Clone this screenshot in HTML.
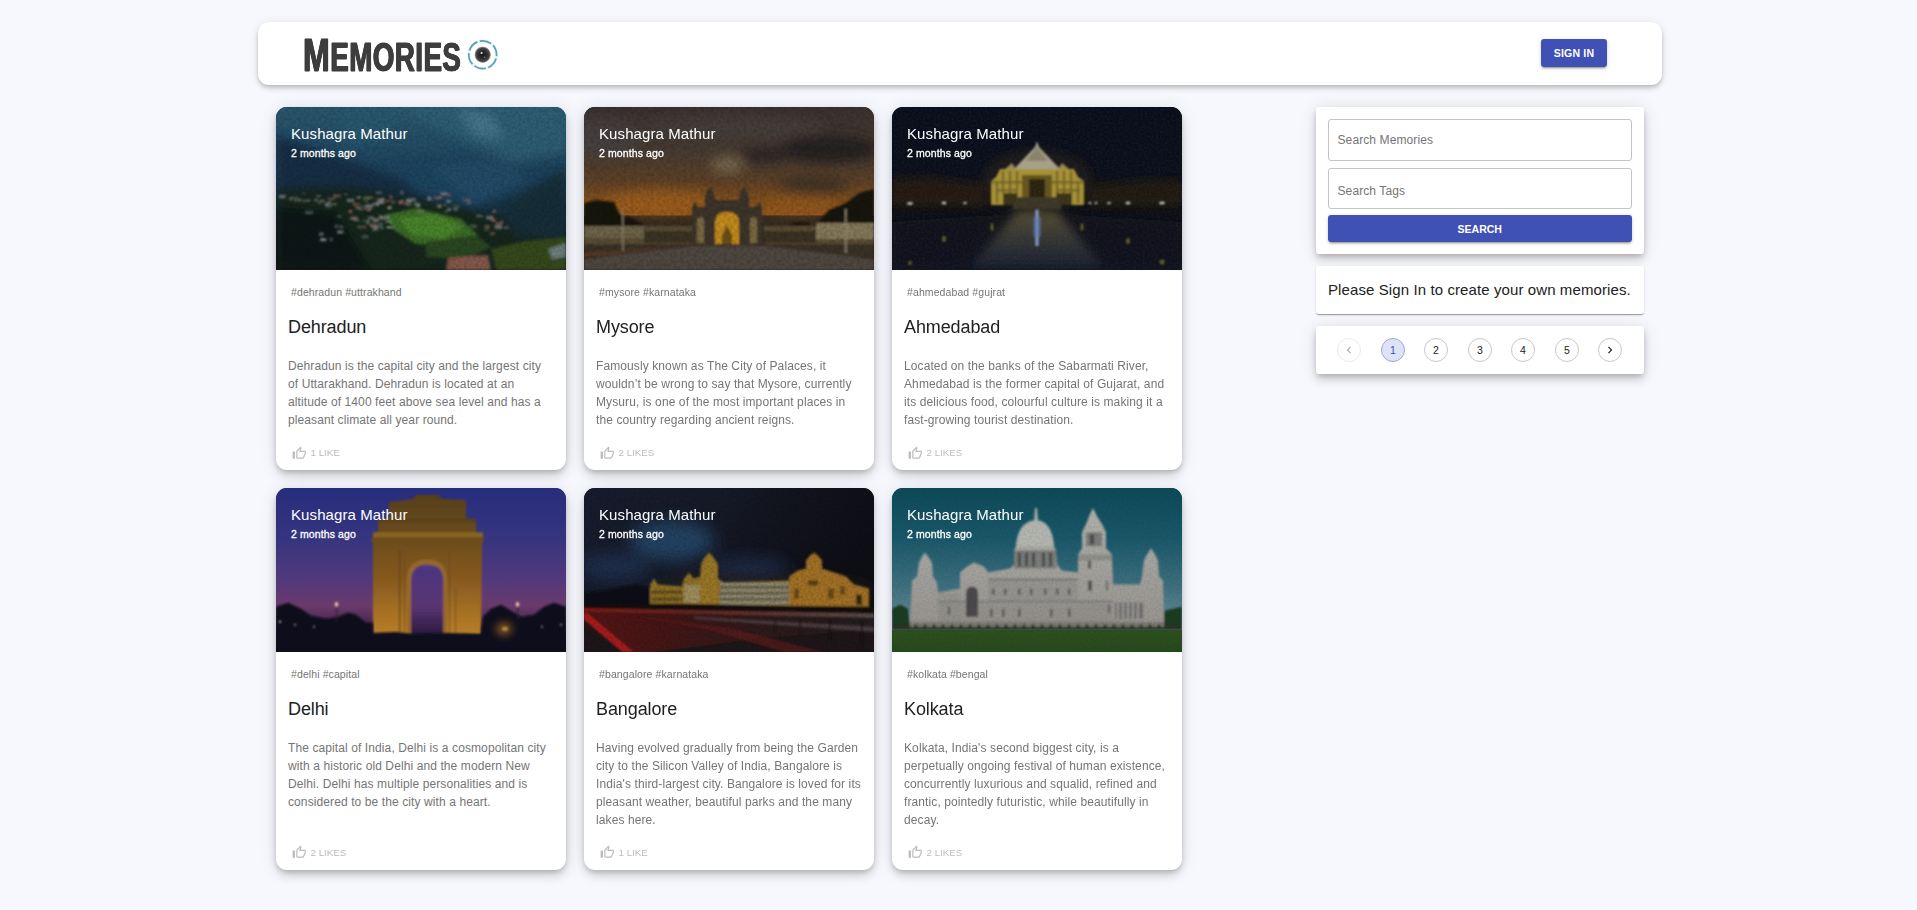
<!DOCTYPE html>
<html lang="en">
<head>
<meta charset="utf-8">
<title>Memories</title>
<style>
*{box-sizing:border-box;margin:0;padding:0}
html,body{width:1917px;height:910px;overflow:hidden}
body{background:#f7f8fd;font-family:"Liberation Sans",sans-serif;position:relative;color:#212121}
#appbar{position:absolute;left:258px;top:21.5px;width:1404px;height:63.5px;background:#fff;border-radius:11px;
 box-shadow:0 2px 4px -1px rgba(0,0,0,.16),0 4px 5px 0 rgba(0,0,0,.1),0 1px 10px 0 rgba(0,0,0,.09)}
#logo{position:absolute;left:44.500px;top:6.500px;font-weight:700;color:#3d3d3d;white-space:nowrap;transform-origin:0 0;transform:scaleX(.69);-webkit-text-stroke:.8px #3d3d3d;text-shadow:.7px 0 0 #3d3d3d,-.7px 0 0 #3d3d3d;letter-spacing:.6px}
#logo .b{font-size:46.6px}
#logo .s{font-size:40.3px}
#eye{position:absolute;left:208px;top:16.400px;width:34px;height:34px}
#signin{letter-spacing:.2px;position:absolute;left:1541px;top:39px;width:66px;height:28px;background:#3f51b5;color:#fff;border-radius:3px;
 font-size:10.5px;font-weight:700;text-align:center;line-height:28px;
 box-shadow:0 3px 1px -2px rgba(0,0,0,.2),0 2px 2px 0 rgba(0,0,0,.14),0 1px 5px 0 rgba(0,0,0,.12)}
.card{position:absolute;width:290px;background:#fff;border-radius:11px;overflow:hidden;
 box-shadow:0 3px 5px -1px rgba(0,0,0,.17),0 6px 10px 0 rgba(0,0,0,.12),0 1px 18px 0 rgba(0,0,0,.1)}
.card .img{position:absolute;left:0;top:0;width:290px;height:162.5px;overflow:hidden;background:#222}
.card .img svg{position:absolute;left:0;top:0;width:290px;height:163px;display:block}
.card .name{position:absolute;left:15px;top:17px;color:#fff;font-size:15px;line-height:20px;white-space:nowrap;letter-spacing:.1px}
.card .ago{position:absolute;left:15px;top:38.5px;color:#fff;font-size:10.5px;line-height:15px;white-space:nowrap;letter-spacing:.1px;-webkit-text-stroke:.3px #fff}
.card .tags{position:absolute;left:15px;top:178px;color:#757575;font-size:10.5px;line-height:15px;white-space:nowrap;letter-spacing:.1px}
.card .title{position:absolute;left:12px;top:208px;color:#212121;font-size:18px;line-height:24px;white-space:nowrap;letter-spacing:-.1px}
.card .desc{position:absolute;left:12px;top:249.700px;width:275px;color:#757575;font-size:12px;line-height:18px;letter-spacing:.1px}
.card .desc span{display:block;white-space:nowrap}
.card .like{position:absolute;left:16px;bottom:8px;height:18px;color:#bdbdbd;font-size:9.75px;line-height:18px;white-space:nowrap;padding-left:18.500px}
.card .like svg{position:absolute;left:0;top:1.500px;width:14.500px;height:14.500px;fill:#bdbdbd}
.panel{position:absolute;left:1316px;width:328px;background:#fff;border-radius:3px}
.inp{position:absolute;left:11.5px;width:304.5px;border:1px solid #c4c4c4;border-radius:3px;color:#757575;font-size:12px;padding-left:9px;letter-spacing:.1px}
.pg{position:absolute;top:12px;width:24px;height:24px;border:1px solid #c8c8c8;border-radius:50%;font-size:10.5px;line-height:22px;text-align:center;color:#212121}
.pg svg{position:absolute;left:4px;top:4px;width:14px;height:14px;fill:#212121}
.r2 .img{height:163.700px}.r2 .img svg{height:164px}.r2 .tags{top:179px}.r2 .title{top:209px}.r2 .desc{top:250.700px}
</style>
</head>
<body>
<div id="appbar"><div id="logo"><span class="b">M</span><span class="s">EMORIES</span></div><svg id="eye" viewBox="0 0 34 34"><defs><radialGradient id="eg"><stop offset="0" stop-color="#161616"/><stop offset=".5" stop-color="#2e2e2e"/><stop offset=".8" stop-color="#4c4c4c"/><stop offset=".9" stop-color="#777" stop-opacity=".7"/><stop offset="1" stop-color="#bbb" stop-opacity="0"/></radialGradient></defs><circle cx="16.700" cy="16.700" r="13.900" fill="none" stroke="#d8f0f6" stroke-width="3.200" opacity=".6"/><circle cx="16.700" cy="16.700" r="13.900" fill="none" stroke="#5d9fb6" stroke-width="1.700" stroke-dasharray="12.050 2.500" stroke-dashoffset="-3.900"/><circle cx="16.700" cy="16.700" r="8.600" fill="url(#eg)"/><circle cx="15.600" cy="15" r="1.100" fill="#ddd"/><circle cx="18.500" cy="19.300" r=".8" fill="#777"/></svg>
</div>
<div id="signin">SIGN IN</div>
<div class="card" style="left:276px;top:107px;height:363px">
<div class="img"><svg viewBox="0 0 290 163" preserveAspectRatio="none">
<defs>
<linearGradient id="a1" x1="0" y1="0" x2="0" y2="1"><stop offset="0" stop-color="#2a586e"/><stop offset=".22" stop-color="#244e68"/><stop offset=".45" stop-color="#1c3f59"/><stop offset=".62" stop-color="#173243"/><stop offset=".8" stop-color="#11261d"/><stop offset="1" stop-color="#0d1d15"/></linearGradient>
<filter id="b1" x="-20%" y="-20%" width="140%" height="140%"><feGaussianBlur stdDeviation="5"/></filter>
<filter id="c1" x="-20%" y="-20%" width="140%" height="140%"><feGaussianBlur stdDeviation="1.6"/></filter>
<filter id="d1" x="-5%" y="-5%" width="110%" height="110%"><feGaussianBlur stdDeviation="1"/></filter>
<filter id="n1"><feTurbulence type="fractalNoise" baseFrequency=".35" numOctaves="2" seed="3"/><feColorMatrix values="0 0 0 0 0  0 0 0 0 0  0 0 0 0 0  0 0 0 .3 -.08"/></filter>
</defs>
<rect width="290" height="163" fill="url(#a1)"/>
<g filter="url(#b1)">
<path d="M120 0L290 0L290 45L240 55L180 30Z" fill="#2f6179" opacity=".8"/>
<path d="M180 2L215 6L228 32L200 30Z" fill="#4f7f95" opacity=".7"/>
<path d="M60 0L130 0L110 30L70 40Z" fill="#2b5a72" opacity=".7"/>
<path d="M0 28L40 42L90 60L140 78L160 100L0 95Z" fill="#152e45"/>
<path d="M110 52L200 48L260 72L200 100L140 85Z" fill="#1d4560"/>
<path d="M150 60L230 50L250 75L200 96Z" fill="#24516c" opacity=".6"/>
<path d="M0 82L70 80L140 90L190 100L230 112L290 120L290 163L0 163Z" fill="#12281c"/>
<path d="M225 108L250 85L290 62L290 135L240 128Z" fill="#162e38"/>
<path d="M0 100L60 105L95 163L0 163Z" fill="#0a1912"/>
</g>
<g filter="url(#c1)">
<path d="M108 108L140 101L185 112L202 128L178 140L140 137L118 123Z" fill="#3a6c27"/>
<path d="M122 111L160 107L188 120L168 132L135 127Z" fill="#4a842c"/>
<path d="M150 135L200 128L215 140L190 152L150 150Z" fill="#2b4621"/>
<path d="M215 142L250 134L290 130L290 163L220 163Z" fill="#34481e"/>
<path d="M172 151L212 148L215 163L170 163Z" fill="#85594c"/>
<path d="M272 142L290 136L290 150L276 152Z" fill="#7c8d95" opacity=".8"/>
</g>
<g filter="url(#d1)"><rect x="18.0" y="91.5" width="7.6" height="2.8" fill="#a09a90" opacity="0.47"/><rect x="14.7" y="89.6" width="7.0" height="2.0" fill="#6f7f8a" opacity="0.46"/><rect x="3.3" y="88.0" width="6.2" height="3.1" fill="#8c9aa0" opacity="0.79"/><rect x="25.9" y="85.4" width="3.8" height="1.8" fill="#9a7068" opacity="0.42"/><rect x="44.9" y="92.8" width="3.2" height="2.8" fill="#5e7a50" opacity="0.64"/><rect x="44.4" y="92.7" width="4.5" height="1.8" fill="#9a7068" opacity="0.58"/><rect x="29.0" y="103.7" width="8.0" height="3.6" fill="#6f7f8a" opacity="0.53"/><rect x="41.9" y="93.3" width="3.4" height="3.5" fill="#8c9aa0" opacity="0.44"/><rect x="38.3" y="91.4" width="3.1" height="3.3" fill="#a09a90" opacity="0.48"/><rect x="57.1" y="87.6" width="7.9" height="2.7" fill="#9a7068" opacity="0.63"/><rect x="48.6" y="95.7" width="4.7" height="2.5" fill="#8a8e94" opacity="0.79"/><rect x="40.5" y="88.0" width="4.2" height="2.0" fill="#8a8e94" opacity="0.59"/><rect x="12.8" y="90.5" width="3.9" height="2.9" fill="#7d8a96" opacity="0.57"/><rect x="26.6" y="92.7" width="8.0" height="1.8" fill="#6f7f8a" opacity="0.80"/><rect x="51.5" y="90.3" width="8.0" height="3.1" fill="#9a7068" opacity="0.42"/><rect x="51.8" y="93.4" width="3.0" height="3.1" fill="#6f7f8a" opacity="0.55"/><rect x="125.3" y="95.5" width="6.2" height="1.8" fill="#a86a5a" opacity="0.55"/><rect x="49.5" y="97.7" width="5.4" height="3.1" fill="#8c9aa0" opacity="0.47"/><rect x="141.0" y="103.0" width="7.1" height="2.3" fill="#a09a90" opacity="0.46"/><rect x="88.1" y="89.4" width="6.4" height="2.7" fill="#5e7a50" opacity="0.64"/><rect x="99.7" y="95.1" width="3.2" height="3.9" fill="#a09a90" opacity="0.70"/><rect x="89.7" y="97.3" width="7.5" height="2.9" fill="#7d8a96" opacity="0.77"/><rect x="122.9" y="93.6" width="5.4" height="3.2" fill="#9a7068" opacity="0.51"/><rect x="124.7" y="92.3" width="3.1" height="2.4" fill="#5e7a50" opacity="0.50"/><rect x="129.5" y="95.2" width="5.7" height="3.9" fill="#9a7068" opacity="0.54"/><rect x="164.3" y="85.1" width="6.3" height="3.3" fill="#7d8a96" opacity="0.64"/><rect x="135.2" y="91.4" width="4.8" height="2.5" fill="#8a8e94" opacity="0.41"/><rect x="91.2" y="89.7" width="6.7" height="2.5" fill="#9a7068" opacity="0.43"/><rect x="70.8" y="91.7" width="7.5" height="3.4" fill="#7d8a96" opacity="0.72"/><rect x="130.0" y="91.6" width="6.4" height="3.8" fill="#8c9aa0" opacity="0.78"/><rect x="138.9" y="95.1" width="3.1" height="3.3" fill="#8c9aa0" opacity="0.63"/><rect x="102.1" y="92.7" width="6.2" height="4.0" fill="#8c9aa0" opacity="0.69"/><rect x="78.9" y="99.3" width="5.9" height="2.8" fill="#9a7068" opacity="0.61"/><rect x="88.5" y="93.6" width="3.4" height="1.8" fill="#9a7068" opacity="0.60"/><rect x="67.7" y="86.6" width="4.3" height="1.8" fill="#6f7f8a" opacity="0.46"/><rect x="86.9" y="90.1" width="6.8" height="2.6" fill="#5e7a50" opacity="0.60"/><rect x="111.4" y="99.1" width="4.3" height="3.2" fill="#a09a90" opacity="0.75"/><rect x="85.3" y="98.4" width="4.6" height="2.1" fill="#5e7a50" opacity="0.54"/><rect x="115.7" y="93.1" width="3.3" height="4.0" fill="#7d8a96" opacity="0.45"/><rect x="53.9" y="96.0" width="7.2" height="2.6" fill="#5e7a50" opacity="0.67"/><rect x="99.9" y="84.6" width="6.1" height="2.5" fill="#8a8e94" opacity="0.51"/><rect x="80.6" y="89.3" width="4.4" height="2.6" fill="#8a8e94" opacity="0.66"/><rect x="96.6" y="95.8" width="6.8" height="2.4" fill="#7d8a96" opacity="0.72"/><rect x="122.3" y="93.8" width="3.5" height="3.0" fill="#a86a5a" opacity="0.78"/><rect x="103.3" y="90.9" width="5.4" height="2.2" fill="#8a8e94" opacity="0.70"/><rect x="103.4" y="93.7" width="4.1" height="3.5" fill="#7d8a96" opacity="0.56"/><rect x="124.2" y="83.5" width="3.4" height="3.9" fill="#8c9aa0" opacity="0.45"/><rect x="76.4" y="96.0" width="7.5" height="2.6" fill="#a86a5a" opacity="0.59"/><rect x="100.2" y="91.2" width="6.6" height="3.6" fill="#9a7068" opacity="0.49"/><rect x="166.7" y="85.8" width="7.9" height="3.0" fill="#a86a5a" opacity="0.50"/><rect x="109.1" y="93.1" width="5.5" height="1.9" fill="#a86a5a" opacity="0.62"/><rect x="113.3" y="88.3" width="3.1" height="3.6" fill="#9a7068" opacity="0.57"/><rect x="176.9" y="98.1" width="6.4" height="3.8" fill="#5e7a50" opacity="0.46"/><rect x="137.7" y="96.3" width="7.2" height="3.3" fill="#5e7a50" opacity="0.63"/><rect x="151.2" y="90.8" width="5.2" height="3.0" fill="#7d8a96" opacity="0.61"/><rect x="170.0" y="92.7" width="4.6" height="2.6" fill="#a09a90" opacity="0.52"/><rect x="171.1" y="100.9" width="4.4" height="2.9" fill="#8c9aa0" opacity="0.61"/><rect x="140.9" y="96.9" width="3.1" height="3.9" fill="#8c9aa0" opacity="0.62"/><rect x="167.1" y="96.9" width="3.5" height="2.2" fill="#5e7a50" opacity="0.57"/><rect x="190.6" y="94.6" width="4.3" height="2.8" fill="#7d8a96" opacity="0.54"/><rect x="186.6" y="91.5" width="7.6" height="3.0" fill="#9a7068" opacity="0.48"/><rect x="136.5" y="90.9" width="3.6" height="3.5" fill="#8a8e94" opacity="0.41"/><rect x="161.2" y="97.5" width="4.4" height="3.4" fill="#a09a90" opacity="0.65"/><rect x="177.9" y="101.0" width="3.6" height="2.9" fill="#6f7f8a" opacity="0.69"/><rect x="151.3" y="89.2" width="3.1" height="3.2" fill="#7d8a96" opacity="0.62"/><rect x="171.3" y="93.3" width="4.1" height="2.3" fill="#7d8a96" opacity="0.49"/><rect x="158.5" y="89.7" width="7.5" height="2.5" fill="#a86a5a" opacity="0.76"/><rect x="168.3" y="103.5" width="4.0" height="2.0" fill="#a09a90" opacity="0.45"/><rect x="101.8" y="115.6" width="5.2" height="3.9" fill="#7d8a96" opacity="0.48"/><rect x="72.6" y="103.0" width="3.5" height="3.1" fill="#a86a5a" opacity="0.76"/><rect x="96.8" y="111.3" width="5.5" height="3.5" fill="#a09a90" opacity="0.72"/><rect x="86.9" y="112.2" width="6.8" height="3.1" fill="#5e7a50" opacity="0.46"/><rect x="93.8" y="116.3" width="7.2" height="4.0" fill="#9a7068" opacity="0.63"/><rect x="104.0" y="119.9" width="3.4" height="2.0" fill="#8c9aa0" opacity="0.59"/><rect x="75.2" y="111.3" width="6.0" height="1.8" fill="#8a8e94" opacity="0.74"/><rect x="96.4" y="119.0" width="6.7" height="2.7" fill="#a09a90" opacity="0.64"/><rect x="110.5" y="119.0" width="4.6" height="2.0" fill="#8c9aa0" opacity="0.63"/><rect x="96.7" y="120.6" width="4.7" height="3.5" fill="#6f7f8a" opacity="0.76"/><rect x="89.2" y="99.9" width="7.1" height="2.7" fill="#a86a5a" opacity="0.75"/><rect x="81.9" y="100.8" width="6.8" height="2.7" fill="#7d8a96" opacity="0.43"/><rect x="81.4" y="118.6" width="3.1" height="2.6" fill="#8a8e94" opacity="0.49"/><rect x="109.5" y="108.5" width="4.7" height="3.3" fill="#7d8a96" opacity="0.61"/><rect x="44.1" y="131.1" width="6.2" height="3.3" fill="#8c9aa0" opacity="0.79"/><rect x="109.2" y="113.4" width="6.7" height="2.4" fill="#8c9aa0" opacity="0.60"/><rect x="91.4" y="101.9" width="3.1" height="2.4" fill="#6f7f8a" opacity="0.76"/><rect x="74.1" y="109.4" width="7.8" height="3.0" fill="#9a7068" opacity="0.66"/><rect x="92.0" y="109.4" width="6.0" height="3.5" fill="#8a8e94" opacity="0.55"/><rect x="102.8" y="109.4" width="7.9" height="3.7" fill="#8a8e94" opacity="0.57"/><rect x="78.6" y="112.2" width="5.0" height="2.5" fill="#6f7f8a" opacity="0.59"/><rect x="86.0" y="128.0" width="6.3" height="3.4" fill="#8a8e94" opacity="0.41"/><rect x="90.1" y="114.1" width="3.8" height="3.5" fill="#8c9aa0" opacity="0.42"/><rect x="84.4" y="118.5" width="5.9" height="3.4" fill="#a86a5a" opacity="0.43"/><rect x="102.3" y="107.9" width="5.4" height="3.9" fill="#a09a90" opacity="0.42"/><rect x="110.8" y="119.4" width="7.5" height="2.1" fill="#a09a90" opacity="0.64"/><rect x="227.6" y="119.6" width="5.3" height="2.2" fill="#8a8e94" opacity="0.54"/><rect x="221.4" y="118.7" width="3.7" height="2.7" fill="#6f7f8a" opacity="0.66"/><rect x="210.3" y="108.8" width="6.7" height="3.6" fill="#7d8a96" opacity="0.78"/><rect x="214.1" y="109.6" width="3.6" height="3.8" fill="#a86a5a" opacity="0.51"/><rect x="200.1" y="107.9" width="6.5" height="2.2" fill="#6f7f8a" opacity="0.70"/><rect x="218.4" y="118.2" width="7.9" height="3.8" fill="#8a8e94" opacity="0.65"/><rect x="224.3" y="114.3" width="3.1" height="1.9" fill="#a09a90" opacity="0.62"/><rect x="219.6" y="115.1" width="6.4" height="3.0" fill="#a86a5a" opacity="0.59"/><rect x="208.4" y="118.3" width="5.5" height="2.1" fill="#9a7068" opacity="0.72"/><rect x="193.9" y="117.6" width="7.2" height="3.5" fill="#5e7a50" opacity="0.57"/><rect x="213.9" y="124.9" width="4.8" height="3.2" fill="#a86a5a" opacity="0.52"/><rect x="216.3" y="102.8" width="3.9" height="3.2" fill="#9a7068" opacity="0.58"/><rect x="208.2" y="120.7" width="5.2" height="3.0" fill="#5e7a50" opacity="0.52"/><rect x="215.8" y="111.6" width="4.1" height="3.3" fill="#9a7068" opacity="0.68"/><rect x="43.0" y="125.4" width="4.6" height="3.7" fill="#a09a90" opacity="0.54"/><rect x="58.6" y="117.4" width="3.6" height="3.4" fill="#6f7f8a" opacity="0.58"/><rect x="62.8" y="118.6" width="4.6" height="2.7" fill="#a09a90" opacity="0.43"/><rect x="61.0" y="123.4" width="6.4" height="3.1" fill="#a09a90" opacity="0.70"/><rect x="53.3" y="130.9" width="3.8" height="3.1" fill="#7d8a96" opacity="0.47"/><rect x="61.2" y="108.5" width="4.4" height="1.8" fill="#8a8e94" opacity="0.62"/></g>
<rect width="290" height="163" filter="url(#n1)"/>
</svg>
</div>
<div class="name">Kushagra Mathur</div><div class="ago">2 months ago</div>
<div class="tags">#dehradun #uttrakhand</div><div class="title">Dehradun</div>
<div class="desc"><span>Dehradun is the capital city and the largest city</span><span>of Uttarakhand. Dehradun is located at an</span><span>altitude of 1400 feet above sea level and has a</span><span>pleasant climate all year round.</span></div>
<div class="like"><svg viewBox="0 0 24 24"><path d="M9 21h9c.83 0 1.54-.5 1.84-1.22l3.02-7.05c.09-.23.14-.47.14-.73v-2c0-1.1-.9-2-2-2h-6.310l.95-4.570.03-.32c0-.41-.17-.79-.44-1.060L14.170 1 7.580 7.590C7.220 7.950 7 8.450 7 9v10c0 1.100.9 2 2 2zM9 9l4.340-4.340L12 10h9v2l-3 7H9V9zM1 9h4v12H1z"/></svg>1 LIKE</div>
</div>
<div class="card" style="left:584px;top:107px;height:363px">
<div class="img"><svg viewBox="0 0 290 163" preserveAspectRatio="none">
<defs>
<linearGradient id="a2" x1="0" y1="0" x2="0" y2="1"><stop offset="0" stop-color="#3a3331"/><stop offset=".28" stop-color="#4a3d33"/><stop offset=".45" stop-color="#5e4228"/><stop offset=".58" stop-color="#85521f"/><stop offset=".66" stop-color="#96591c"/><stop offset=".67" stop-color="#3a2e22"/><stop offset="1" stop-color="#2a2420"/></linearGradient>
<filter id="b2" x="-20%" y="-20%" width="140%" height="140%"><feGaussianBlur stdDeviation="6"/></filter>
<filter id="c2" x="-20%" y="-20%" width="140%" height="140%"><feGaussianBlur stdDeviation="1.2"/></filter>
<filter id="n2"><feTurbulence type="fractalNoise" baseFrequency=".3" numOctaves="2" seed="5"/><feColorMatrix values="0 0 0 0 0  0 0 0 0 0  0 0 0 0 0  0 0 0 .3 -.08"/></filter>
</defs>
<rect width="290" height="163" fill="url(#a2)"/>
<g filter="url(#b2)">
<ellipse cx="245" cy="42" rx="50" ry="14" fill="#282423"/>
<ellipse cx="180" cy="48" rx="25" ry="8" fill="#2d2826"/>
<ellipse cx="150" cy="20" rx="90" ry="12" fill="#4a4240" opacity=".6"/>
<ellipse cx="143" cy="58" rx="16" ry="8" fill="#8a7a5e" opacity=".75"/>
<ellipse cx="75" cy="95" rx="55" ry="12" fill="#a5621c" opacity=".7"/>
<ellipse cx="215" cy="98" rx="35" ry="9" fill="#9a5a1c" opacity=".6"/>
<ellipse cx="230" cy="78" rx="35" ry="9" fill="#3a2e28" opacity=".8"/>
<ellipse cx="20" cy="30" rx="40" ry="20" fill="#4a4548" opacity=".6"/>
</g>
<g filter="url(#c2)">
<path d="M0 96L12 93L30 95L36 108L50 112L60 118L0 122Z" fill="#17130c"/>
<path d="M290 82L275 86L262 96L245 103L232 118L290 122Z" fill="#17130c"/>
<path d="M205 118L212 115L225 116L228 122L205 123Z" fill="#1d160e"/>
<rect x="0" y="119" width="108" height="18" fill="#5a4d36"/>
<rect x="0" y="119" width="60" height="12" fill="#6e6248"/>
<rect x="180" y="119" width="110" height="18" fill="#5a4d36"/>
<rect x="232" y="116" width="58" height="16" fill="#85785a"/>
<rect x="60" y="124" width="48" height="12" fill="#3a3022"/>
<rect x="180" y="124" width="52" height="12" fill="#3a3022"/>
<path d="M0 137L290 137L290 150L0 150Z" fill="#3b3028"/>
<path d="M0 163L0 152L110 139L180 139L290 152L290 163Z" fill="#4f463f"/>
<path d="M0 150L100 140L0 146Z" fill="#5a3a22"/>
<path d="M108 138L108 100L111 94L114 100L121 100L121 90L123 84L126 80L129 84L131 90L131 93L155 93L155 90L157 84L160 80L163 84L165 90L165 100L172 100L175 94L178 100L178 138Z" fill="#3d3529"/>
<path d="M131 137L131 116Q131 105 143 105Q155 105 155 116L155 137Z" fill="#c48c1c"/>
<path d="M138 137L138 128L141 122L143 118L145 122L148 128L148 137Z" fill="#6a5018"/>
<path d="M113 136L113 114Q113 110 116.500 110Q120 110 120 114L120 136Z" fill="#7a6a42"/>
<path d="M166 136L166 114Q166 110 169.500 110Q173 110 173 114L173 136Z" fill="#7a6a42"/>
<rect x="38" y="100" width="1.500" height="44" fill="#8a8068"/>
<rect x="261" y="102" width="1.500" height="44" fill="#9a9078"/>
</g>
<rect width="290" height="163" filter="url(#n2)"/>
</svg>
</div>
<div class="name">Kushagra Mathur</div><div class="ago">2 months ago</div>
<div class="tags">#mysore #karnataka</div><div class="title">Mysore</div>
<div class="desc"><span>Famously known as The City of Palaces, it</span><span>wouldn’t be wrong to say that Mysore, currently</span><span>Mysuru, is one of the most important places in</span><span>the country regarding ancient reigns.</span></div>
<div class="like"><svg viewBox="0 0 24 24"><path d="M9 21h9c.83 0 1.54-.5 1.84-1.22l3.02-7.05c.09-.23.14-.47.14-.73v-2c0-1.1-.9-2-2-2h-6.310l.95-4.570.03-.32c0-.41-.17-.79-.44-1.060L14.170 1 7.580 7.590C7.220 7.950 7 8.450 7 9v10c0 1.100.9 2 2 2zM9 9l4.340-4.340L12 10h9v2l-3 7H9V9zM1 9h4v12H1z"/></svg>2 LIKES</div>
</div>
<div class="card" style="left:892px;top:107px;height:363px">
<div class="img"><svg viewBox="0 0 290 163" preserveAspectRatio="none">
<defs>
<linearGradient id="a3" x1="0" y1="0" x2="0" y2="1"><stop offset="0" stop-color="#090d1a"/><stop offset=".42" stop-color="#0a0e1a"/><stop offset=".5" stop-color="#14120f"/><stop offset=".57" stop-color="#19150f"/><stop offset=".62" stop-color="#0d0f14"/><stop offset="1" stop-color="#0b0f1c"/></linearGradient>
<linearGradient id="r3" x1="0" y1="0" x2="0" y2="1"><stop offset="0" stop-color="#544b2e"/><stop offset=".4" stop-color="#383832"/><stop offset="1" stop-color="#161c2e"/></linearGradient>
<filter id="b3" x="-20%" y="-20%" width="140%" height="140%"><feGaussianBlur stdDeviation="5"/></filter>
<filter id="c3" x="-20%" y="-20%" width="140%" height="140%"><feGaussianBlur stdDeviation=".8"/></filter>
<filter id="n3"><feTurbulence type="fractalNoise" baseFrequency=".45" numOctaves="2" seed="21"/><feColorMatrix values="0 0 0 0 .22  0 0 0 0 .24  0 0 0 0 .3  0 0 0 .35 -.12"/></filter>
</defs>
<rect width="290" height="163" fill="url(#a3)"/>
<g filter="url(#b3)">
<path d="M0 72L40 70L90 78L95 98L0 98Z" fill="#261d10" opacity=".8"/>
<path d="M290 74L250 72L200 80L195 98L290 98Z" fill="#211a10" opacity=".8"/>
<ellipse cx="145" cy="72" rx="55" ry="30" fill="#2a2410" opacity=".45"/>
<path d="M125 104L165 104L215 163L75 163Z" fill="url(#r3)"/>
<path d="M0 115L110 108L70 163L0 163Z" fill="#14161a" opacity=".7"/>
<path d="M290 115L180 108L220 163L290 163Z" fill="#12151c" opacity=".7"/>
</g>
<g filter="url(#c3)">
<path d="M145 34L147 40L168 62L122 62L143 40Z" fill="#a8a288"/>
<path d="M145 40L156 54L134 54Z" fill="#8a846c"/>
<path d="M108 62L182 62L186 70L192 74L192 98L99 98L99 74L104 70Z" fill="#a89236"/>
<path d="M113 62L120 56L124 62ZM166 62L170 56L177 62Z" fill="#9a8c58"/>
<rect x="99" y="74" width="93" height="2.500" fill="#786826"/><rect x="104" y="82" width="20" height="2.500" fill="#786826"/><rect x="166" y="82" width="22" height="2.500" fill="#786826"/>
<g fill="#6e5e22"><rect x="104" y="76" width="2" height="20"/><rect x="110" y="64" width="2" height="22"/><rect x="117" y="64" width="2" height="22"/><rect x="124" y="64" width="2" height="26"/><rect x="164" y="64" width="2" height="26"/><rect x="171" y="64" width="2" height="22"/><rect x="178" y="64" width="2" height="22"/><rect x="185" y="76" width="2" height="20"/></g>
<rect x="130" y="68" width="30" height="22" fill="#64541e"/>
<rect x="137" y="72" width="16" height="18" fill="#2a2410"/>
<rect x="111" y="86" width="14" height="12" fill="#3a3012"/>
<rect x="164" y="86" width="16" height="12" fill="#3a3012"/>
<path d="M124 90L166 90L170 102L120 102Z" fill="#3a3426"/>
<rect x="143.500" y="103" width="3" height="36" fill="#86a2d8"/>
<rect x="141" y="110" width="8" height="20" fill="#5a78b8" opacity=".5"/>
<g fill="#d8d8c8"><ellipse cx="18" cy="96.500" rx="3" ry="1.300"/><ellipse cx="52" cy="96" rx="2.500" ry="1.200"/><ellipse cx="73" cy="96" rx="2" ry="1"/><ellipse cx="198" cy="96" rx="1.500" ry="1"/><ellipse cx="204" cy="96" rx="1.500" ry="1"/><ellipse cx="217" cy="96" rx="2" ry="1"/><ellipse cx="236" cy="96" rx="2.500" ry="1.200"/><ellipse cx="270" cy="96" rx="3" ry="1.300"/></g>
<g fill="#8a7a3a" opacity=".7"><ellipse cx="52" cy="132" rx="2" ry="3"/><ellipse cx="18" cy="156" rx="2" ry="2"/><ellipse cx="236" cy="134" rx="2" ry="3"/><ellipse cx="270" cy="155" rx="2.500" ry="2.500"/><ellipse cx="100" cy="120" rx="1.500" ry="4"/><ellipse cx="190" cy="120" rx="1.500" ry="4"/></g>
</g>
<rect width="290" height="163" filter="url(#n3)" opacity=".5"/>
</svg>
</div>
<div class="name">Kushagra Mathur</div><div class="ago">2 months ago</div>
<div class="tags">#ahmedabad #gujrat</div><div class="title">Ahmedabad</div>
<div class="desc"><span>Located on the banks of the Sabarmati River,</span><span>Ahmedabad is the former capital of Gujarat, and</span><span>its delicious food, colourful culture is making it a</span><span>fast-growing tourist destination.</span></div>
<div class="like"><svg viewBox="0 0 24 24"><path d="M9 21h9c.83 0 1.54-.5 1.84-1.22l3.02-7.05c.09-.23.14-.47.14-.73v-2c0-1.1-.9-2-2-2h-6.310l.95-4.570.03-.32c0-.41-.17-.79-.44-1.060L14.170 1 7.580 7.590C7.220 7.950 7 8.450 7 9v10c0 1.100.9 2 2 2zM9 9l4.340-4.340L12 10h9v2l-3 7H9V9zM1 9h4v12H1z"/></svg>2 LIKES</div>
</div>
<div class="card r2" style="left:276px;top:488px;height:381.6px">
<div class="img"><svg viewBox="0 0 290 163" preserveAspectRatio="none">
<defs>
<linearGradient id="a4" x1="0" y1="0" x2="0" y2="1"><stop offset="0" stop-color="#272d7c"/><stop offset=".3" stop-color="#35347f"/><stop offset=".55" stop-color="#51397c"/><stop offset=".72" stop-color="#6a3a6c"/><stop offset=".82" stop-color="#4a2850"/><stop offset=".9" stop-color="#15102a"/><stop offset="1" stop-color="#0a0c1c"/></linearGradient>
<linearGradient id="g4" x1="0" y1="0" x2="0" y2="1"><stop offset="0" stop-color="#574019"/><stop offset=".3" stop-color="#6b4c1e"/><stop offset=".6" stop-color="#86591f"/><stop offset=".85" stop-color="#a87224"/><stop offset="1" stop-color="#b87e28"/></linearGradient>
<linearGradient id="s4" x1="0" y1="0" x2="0" y2="1"><stop offset="0" stop-color="#4a3780"/><stop offset=".6" stop-color="#5a3572"/><stop offset="1" stop-color="#2a1a40"/></linearGradient>
<filter id="c4" x="-20%" y="-20%" width="140%" height="140%"><feGaussianBlur stdDeviation="1"/></filter>
<filter id="b4" x="-150%" y="-150%" width="400%" height="400%"><feGaussianBlur stdDeviation="4"/></filter>
</defs>
<rect width="290" height="163" fill="url(#a4)"/>
<g filter="url(#c4)">
<path d="M140 7L162 7L166 11L190 12L190 30L200 31L200 48L208 50L206 56L205 146L97 146L97 56L95 50L102 48L102 31L113 30L113 14L137 11Z" fill="url(#g4)"/>
<rect x="97" y="44" width="110" height="5" fill="#8a6424"/>
<rect x="102" y="31" width="98" height="3" fill="#5a4018"/>
<path d="M135 146L135 92Q135 76 151 76Q167.500 76 167.500 92L167.500 146Z" fill="url(#s4)"/>
<path d="M131 146L131 92Q131 71 151 71Q171 71 171 92L171 146L167.500 146L167.500 92Q167.500 76 151 76Q135 76 135 92L135 146Z" fill="#96682a"/>
<rect x="123" y="62" width="1.200" height="84" fill="#5a3e16"/>
<rect x="128" y="62" width="1" height="84" fill="#6a4a1a"/>
<rect x="173" y="62" width="1" height="84" fill="#6a4a1a"/>
<rect x="179" y="100" width="1" height="46" fill="#6a4a1a"/>
</g>
<g filter="url(#c4)">
<path d="M0 118L12 114L25 120L35 127L50 130L62 128L72 124L80 126L90 134L97 134L97 144L120 143L135 145L170 144L205 145L207 128L215 120L225 116L235 122L245 128L258 126L268 118L278 114L290 118L290 163L0 163Z" fill="#0b0c1a"/>
</g><g filter="url(#b4)"><ellipse cx="228" cy="140" rx="8" ry="6" fill="#8a5a20"/></g><g filter="url(#c4)"><ellipse cx="229" cy="140" rx="3" ry="2" fill="#b88a38"/>
<rect x="60" y="117" width="1.200" height="16" fill="#2a2030"/>
<rect x="241" y="117" width="1.200" height="14" fill="#2a2030"/>
<ellipse cx="60.500" cy="115.500" rx="1.600" ry="2.200" fill="#e8d8a8"/>
<ellipse cx="241.500" cy="115.500" rx="1.600" ry="2.200" fill="#e8d8a8"/>
<g fill="#a8a088"><circle cx="4" cy="133" r="1.300"/><circle cx="19" cy="136" r="1"/><circle cx="38" cy="138" r="1"/><circle cx="266" cy="138" r="1"/><circle cx="285" cy="136" r="1"/></g>
</g>
</svg>
</div>
<div class="name">Kushagra Mathur</div><div class="ago">2 months ago</div>
<div class="tags">#delhi #capital</div><div class="title">Delhi</div>
<div class="desc"><span>The capital of India, Delhi is a cosmopolitan city</span><span>with a historic old Delhi and the modern New</span><span>Delhi. Delhi has multiple personalities and is</span><span>considered to be the city with a heart.</span></div>
<div class="like"><svg viewBox="0 0 24 24"><path d="M9 21h9c.83 0 1.54-.5 1.84-1.22l3.02-7.05c.09-.23.14-.47.14-.73v-2c0-1.1-.9-2-2-2h-6.310l.95-4.570.03-.32c0-.41-.17-.79-.44-1.060L14.170 1 7.580 7.590C7.220 7.950 7 8.450 7 9v10c0 1.100.9 2 2 2zM9 9l4.340-4.340L12 10h9v2l-3 7H9V9zM1 9h4v12H1z"/></svg>2 LIKES</div>
</div>
<div class="card r2" style="left:584px;top:488px;height:381.6px">
<div class="img"><svg viewBox="0 0 290 163" preserveAspectRatio="none">
<defs>
<linearGradient id="a5" x1="0" y1="0" x2="1" y2=".35"><stop offset="0" stop-color="#171d2e"/><stop offset=".45" stop-color="#161a28"/><stop offset=".75" stop-color="#11121b"/><stop offset="1" stop-color="#0e0e15"/></linearGradient>
<linearGradient id="r5" x1="0" y1="0" x2="1" y2="0"><stop offset="0" stop-color="#571515"/><stop offset=".3" stop-color="#431616"/><stop offset=".6" stop-color="#2e1a1a"/><stop offset="1" stop-color="#221d1f"/></linearGradient>
<linearGradient id="t5" x1="0" y1="0" x2="1" y2="0"><stop offset="0" stop-color="#8a1c1a"/><stop offset=".4" stop-color="#6a2a26"/><stop offset="1" stop-color="#5a504e"/></linearGradient>
<filter id="b5" x="-30%" y="-30%" width="160%" height="160%"><feGaussianBlur stdDeviation="8"/></filter>
<filter id="c5" x="-20%" y="-20%" width="140%" height="140%"><feGaussianBlur stdDeviation=".9"/></filter>
<filter id="n5"><feTurbulence type="fractalNoise" baseFrequency=".4" numOctaves="2" seed="8"/><feColorMatrix values="0 0 0 0 0  0 0 0 0 0  0 0 0 0 0  0 0 0 .3 -.08"/></filter>
</defs>
<rect width="290" height="163" fill="url(#a5)"/>
<g filter="url(#b5)">
<ellipse cx="88" cy="52" rx="42" ry="20" fill="#244a6e" opacity=".85"/>
<ellipse cx="30" cy="78" rx="35" ry="13" fill="#1e3454" opacity=".85"/>
<ellipse cx="165" cy="78" rx="40" ry="9" fill="#1e3050" opacity=".85"/>
<ellipse cx="180" cy="102" rx="110" ry="14" fill="#352c18" opacity=".45"/>
</g>
<rect x="0" y="119" width="290" height="44" fill="#1e1618"/>
<path d="M0 119L290 124L290 140L170 150L70 163L44 163L0 128Z" fill="url(#r5)"/>
<g filter="url(#c5)">
<path d="M0 104L20 102L40 98L52 96L66 100L66 118L0 116Z" fill="#0c0e14"/>
<path d="M66 116L66 96L70 90L74 96L98 98L100 90L105 84L110 90L116 88L117 76L120 70L125 64L130 70L134 76L134 90L140 94L205 92L205 118Z" fill="#8e7026"/>
<path d="M117 76L120 70L125 64L130 70L134 76L134 116L117 116Z" fill="#9a7828"/>
<rect x="68" y="102" width="30" height="3" fill="#5a4618"/><rect x="68" y="109" width="30" height="3" fill="#5a4618"/>
<rect x="136" y="94" width="70" height="22" fill="#8f8a6e"/>
<rect x="136" y="97.500" width="70" height="2.200" fill="#5a5440"/><rect x="136" y="103.500" width="70" height="2.200" fill="#5a5440"/><rect x="136" y="109.500" width="70" height="2.200" fill="#5a5440"/>
<path d="M205 118L205 88L214 82L222 80L222 72L226 67L230 64L234 67L238 72L238 80L250 84L262 88L270 96L285 100L285 118Z" fill="#a37226"/>
<rect x="100" y="96" width="16" height="18" fill="#a89a70" opacity=".7"/>
<rect x="224" y="92" width="10" height="5" fill="#5a3c14"/><rect x="210" y="100" width="5" height="10" fill="#6a4818"/><rect x="244" y="100" width="6" height="10" fill="#6a4818"/><rect x="272" y="106" width="6" height="10" fill="#3a2810"/><rect x="256" y="98" width="5" height="8" fill="#6a4818"/>
<path d="M0 115L100 115L205 117L290 118L290 125L0 120Z" fill="#13110e"/>
<path d="M0 119.500L290 125L290 129L0 122.500Z" fill="url(#t5)"/>
<path d="M110 128L290 138L290 143L110 130Z" fill="#54484a" opacity=".8"/>
<path d="M0 125L3 124L50 163L38 163L0 131Z" fill="#a81c1c"/>
<path d="M30 124L150 140L240 163L200 163L120 140Z" fill="#5c1818" opacity=".7"/>
<g fill="#141014"><rect x="190" y="128" width="1.500" height="14"/><rect x="215" y="130" width="1.500" height="16"/><rect x="245" y="132" width="1.800" height="20"/><rect x="277" y="134" width="2" height="24"/></g>
</g>
<rect width="290" height="163" filter="url(#n5)"/>
</svg>
</div>
<div class="name">Kushagra Mathur</div><div class="ago">2 months ago</div>
<div class="tags">#bangalore #karnataka</div><div class="title">Bangalore</div>
<div class="desc"><span>Having evolved gradually from being the Garden</span><span>city to the Silicon Valley of India, Bangalore is</span><span>India's third-largest city. Bangalore is loved for its</span><span>pleasant weather, beautiful parks and the many</span><span>lakes here.</span></div>
<div class="like"><svg viewBox="0 0 24 24"><path d="M9 21h9c.83 0 1.54-.5 1.84-1.22l3.02-7.05c.09-.23.14-.47.14-.73v-2c0-1.1-.9-2-2-2h-6.310l.95-4.570.03-.32c0-.41-.17-.79-.44-1.060L14.170 1 7.580 7.590C7.220 7.950 7 8.450 7 9v10c0 1.100.9 2 2 2zM9 9l4.340-4.340L12 10h9v2l-3 7H9V9zM1 9h4v12H1z"/></svg>1 LIKE</div>
</div>
<div class="card r2" style="left:892px;top:488px;height:381.6px">
<div class="img"><svg viewBox="0 0 290 163" preserveAspectRatio="none">
<defs>
<linearGradient id="a6" x1="0" y1="0" x2="0" y2="1"><stop offset="0" stop-color="#0d4a58"/><stop offset=".3" stop-color="#19586a"/><stop offset=".6" stop-color="#3f707f"/><stop offset=".78" stop-color="#5f8794"/><stop offset=".86" stop-color="#6a8e98"/><stop offset=".87" stop-color="#2d5220"/><stop offset="1" stop-color="#264a1c"/></linearGradient>
<linearGradient id="m6" x1="0" y1="0" x2="0" y2="1"><stop offset="0" stop-color="#b0b2ac"/><stop offset="1" stop-color="#989490"/></linearGradient>
<filter id="c6" x="-20%" y="-20%" width="140%" height="140%"><feGaussianBlur stdDeviation=".9"/></filter>
<filter id="n6"><feTurbulence type="fractalNoise" baseFrequency=".5" numOctaves="2" seed="11"/><feColorMatrix values="0 0 0 0 0  0 0 0 0 0  0 0 0 0 0  0 0 0 .16 -.05"/></filter>
</defs>
<rect width="290" height="163" fill="url(#a6)"/>
<g filter="url(#c6)">
<path d="M0 120L8 116L16 120L18 138L0 138Z" fill="#1c3a24"/>
<path d="M272 122L290 118L290 140L272 140Z" fill="#1c3a24"/>
<g fill="url(#m6)">
<path d="M18 138L20 92L25 88L27 74L30 68L33 64L36 68L40 74L41 88L45 94L46 104L68 100L68 84L75 78L82 74L92 78L96 84L118 80L122 76L122 62L124 58Q126 34 142 32L143 20L145 20L146 32Q160 34 162 58L164 62L165 76L170 82L186 84L186 66L190 60L190 44L194 36L197 28L201 20L205 28L210 36L214 44L214 60L220 66L221 96L248 96L250 88L252 72L255 66L259 60L263 66L266 72L267 88L271 92L272 138Z"/>
</g>
<rect x="46" y="104" width="22" height="34" fill="#96948e"/>

<rect x="122" y="62" width="42" height="18" fill="#7d7e7c"/>
<rect x="126" y="64" width="3" height="14" fill="#4a4c4e"/><rect x="133" y="64" width="3" height="14" fill="#4a4c4e"/><rect x="140" y="64" width="3" height="14" fill="#4a4c4e"/><rect x="150" y="64" width="3" height="14" fill="#4a4c4e"/><rect x="157" y="64" width="3" height="14" fill="#4a4c4e"/>
<path d="M124 58Q126 34 142 33L146 33Q160 34 162 58Z" fill="#b4b6b0"/>
<rect x="194" y="44" width="16" height="14" fill="#7b7c7a"/>
<rect x="198" y="46" width="4" height="10" fill="#4a4c4e"/>
<rect x="196" y="72" width="3" height="8" fill="#555"/><rect x="196" y="92" width="4" height="10" fill="#555"/><rect x="214" y="92" width="2" height="10" fill="#666"/>
<rect x="96" y="90" width="90" height="2" fill="#77787a"/><rect x="96" y="92" width="90" height="20" fill="#8a8a86" opacity=".5"/><rect x="46" y="113" width="175" height="20" fill="#8c8a86" opacity=".45"/><rect x="186" y="66" width="34" height="6" fill="#7e7e7c" opacity=".6"/>
<rect x="46" y="112" width="175" height="1.500" fill="#7a7a7a"/>
<g fill="#5a5a5c"><rect x="100" y="100" width="2.500" height="6"/><rect x="112" y="100" width="2.500" height="6"/><rect x="126" y="100" width="2.500" height="6"/><rect x="138" y="100" width="2.500" height="6"/><rect x="152" y="100" width="2.500" height="6"/><rect x="164" y="100" width="2.500" height="6"/><rect x="176" y="100" width="2.500" height="6"/>
<rect x="56" y="118" width="2" height="8"/><rect x="98" y="120" width="2.500" height="8"/><rect x="110" y="120" width="2.500" height="8"/><rect x="126" y="120" width="2.500" height="8"/><rect x="158" y="120" width="2.500" height="8"/><rect x="176" y="120" width="2.500" height="8"/><rect x="216" y="116" width="2" height="8"/></g>
<path d="M74 128L74 106Q74 98 80 98Q86 98 86 106L86 128Z" fill="#4c4a4c"/><rect x="223" y="114" width="28" height="16" fill="#6e6e70"/>
<g fill="#a09e98"><rect x="225" y="114" width="2" height="16"/><rect x="230" y="114" width="2" height="16"/><rect x="235" y="114" width="2" height="16"/><rect x="240" y="114" width="2" height="16"/><rect x="245" y="114" width="2" height="16"/></g>
<rect x="0" y="137" width="290" height="4" fill="#2a3224"/>
<rect x="18" y="133" width="254" height="5" fill="#7c7a74"/><ellipse cx="24" cy="137.500" rx="1.500" ry="2" fill="#27301f"/><ellipse cx="33" cy="137.500" rx="1.500" ry="2" fill="#27301f"/><ellipse cx="42" cy="137.500" rx="1.500" ry="2" fill="#27301f"/><ellipse cx="51" cy="137.500" rx="1.500" ry="2" fill="#27301f"/><ellipse cx="60" cy="137.500" rx="1.500" ry="2" fill="#27301f"/><ellipse cx="69" cy="137.500" rx="1.500" ry="2" fill="#27301f"/><ellipse cx="78" cy="137.500" rx="1.500" ry="2" fill="#27301f"/><ellipse cx="87" cy="137.500" rx="1.500" ry="2" fill="#27301f"/><ellipse cx="96" cy="137.500" rx="1.500" ry="2" fill="#27301f"/><ellipse cx="105" cy="137.500" rx="1.500" ry="2" fill="#27301f"/><ellipse cx="114" cy="137.500" rx="1.500" ry="2" fill="#27301f"/><ellipse cx="123" cy="137.500" rx="1.500" ry="2" fill="#27301f"/><ellipse cx="132" cy="137.500" rx="1.500" ry="2" fill="#27301f"/><ellipse cx="141" cy="137.500" rx="1.500" ry="2" fill="#27301f"/><ellipse cx="150" cy="137.500" rx="1.500" ry="2" fill="#27301f"/><ellipse cx="159" cy="137.500" rx="1.500" ry="2" fill="#27301f"/><ellipse cx="168" cy="137.500" rx="1.500" ry="2" fill="#27301f"/><ellipse cx="177" cy="137.500" rx="1.500" ry="2" fill="#27301f"/><ellipse cx="186" cy="137.500" rx="1.500" ry="2" fill="#27301f"/><ellipse cx="195" cy="137.500" rx="1.500" ry="2" fill="#27301f"/><ellipse cx="204" cy="137.500" rx="1.500" ry="2" fill="#27301f"/><ellipse cx="213" cy="137.500" rx="1.500" ry="2" fill="#27301f"/><ellipse cx="222" cy="137.500" rx="1.500" ry="2" fill="#27301f"/><ellipse cx="231" cy="137.500" rx="1.500" ry="2" fill="#27301f"/><ellipse cx="240" cy="137.500" rx="1.500" ry="2" fill="#27301f"/><ellipse cx="249" cy="137.500" rx="1.500" ry="2" fill="#27301f"/><ellipse cx="258" cy="137.500" rx="1.500" ry="2" fill="#27301f"/><ellipse cx="267" cy="137.500" rx="1.500" ry="2" fill="#27301f"/>
</g>
<rect width="290" height="163" filter="url(#n6)"/>
</svg>
</div>
<div class="name">Kushagra Mathur</div><div class="ago">2 months ago</div>
<div class="tags">#kolkata #bengal</div><div class="title">Kolkata</div>
<div class="desc"><span>Kolkata, India's second biggest city, is a</span><span>perpetually ongoing festival of human existence,</span><span>concurrently luxurious and squalid, refined and</span><span>frantic, pointedly futuristic, while beautifully in</span><span>decay.</span></div>
<div class="like"><svg viewBox="0 0 24 24"><path d="M9 21h9c.83 0 1.54-.5 1.84-1.22l3.02-7.05c.09-.23.14-.47.14-.73v-2c0-1.1-.9-2-2-2h-6.310l.95-4.570.03-.32c0-.41-.17-.79-.44-1.060L14.170 1 7.580 7.590C7.220 7.950 7 8.450 7 9v10c0 1.100.9 2 2 2zM9 9l4.340-4.340L12 10h9v2l-3 7H9V9zM1 9h4v12H1z"/></svg>2 LIKES</div>
</div>
<div class="panel" style="top:107px;height:147px;box-shadow:0 3px 5px -1px rgba(0,0,0,.17),0 6px 10px 0 rgba(0,0,0,.12),0 1px 18px 0 rgba(0,0,0,.1)">
  <div class="inp" style="top:11.5px;height:42px;line-height:41px">Search Memories</div>
  <div class="inp" style="top:60.5px;height:41px;line-height:45px">Search Tags</div>
  <div style="position:absolute;left:11.5px;top:108px;width:304.5px;height:27px;background:#3f51b5;border-radius:3px;color:#fff;font-size:10.5px;font-weight:700;text-align:center;line-height:29px;box-shadow:0 3px 1px -2px rgba(0,0,0,.2),0 2px 2px 0 rgba(0,0,0,.14),0 1px 5px 0 rgba(0,0,0,.12)">SEARCH</div>
</div>
<div class="panel" style="top:266px;height:48px;box-shadow:0 2px 1px -1px rgba(0,0,0,.2),0 1px 1px 0 rgba(0,0,0,.14),0 1px 3px 0 rgba(0,0,0,.12)">
  <div style="position:absolute;left:12px;top:14px;font-size:15px;line-height:20px;white-space:nowrap;letter-spacing:.1px;color:#212121">Please Sign In to create your own memories.</div>
</div>
<div class="panel" style="top:326px;height:48px;box-shadow:0 3px 5px -1px rgba(0,0,0,.17),0 6px 10px 0 rgba(0,0,0,.12),0 1px 18px 0 rgba(0,0,0,.1)">
  <div class="pg" style="left:21px;opacity:.38"><svg viewBox="0 0 24 24"><path d="M15.410 7.410L14 6l-6 6 6 6 1.410-1.410L10.830 12z"/></svg></div>
  <div class="pg" style="left:65px;background:#dfe3f6;border-color:#9aa5dc;color:#3f51b5">1</div>
  <div class="pg" style="left:108px">2</div>
  <div class="pg" style="left:152px">3</div>
  <div class="pg" style="left:195px">4</div>
  <div class="pg" style="left:239px">5</div>
  <div class="pg" style="left:282px"><svg viewBox="0 0 24 24"><path d="M10 6L8.590 7.410 13.170 12l-4.580 4.590L10 18l6-6z"/></svg></div>
</div>
</body>
</html>
